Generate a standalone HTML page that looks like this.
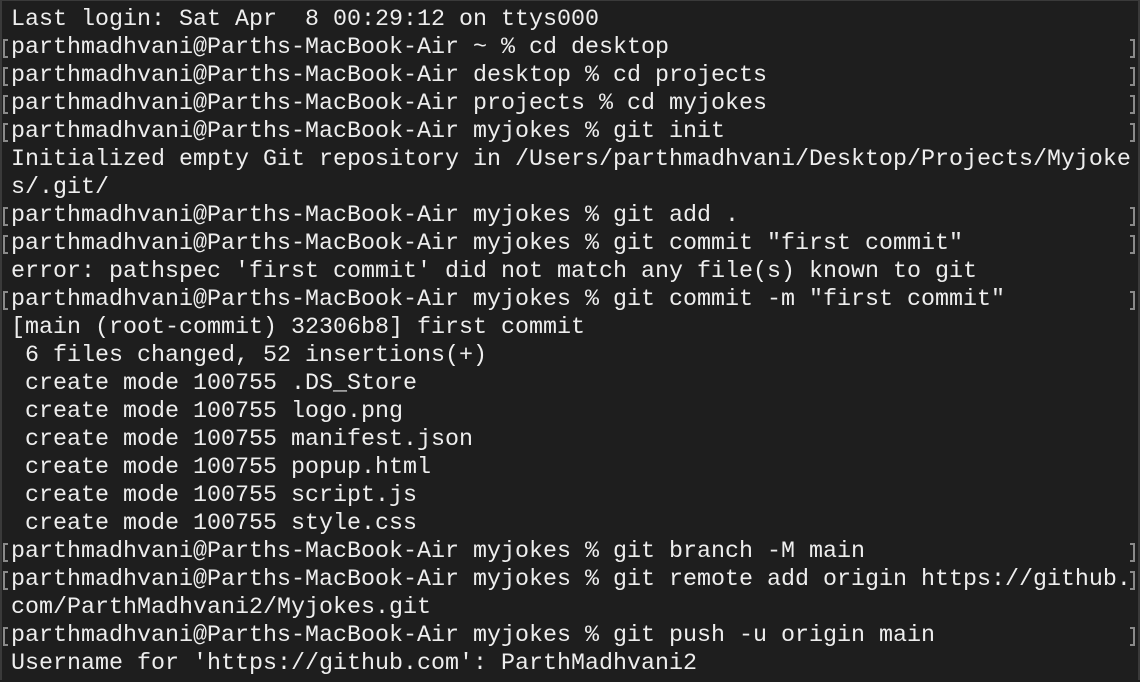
<!DOCTYPE html>
<html><head><style>
html,body{margin:0;padding:0;}
body{width:1140px;height:680px;background:#1e1e1e;overflow:hidden;position:relative;border-top:1px solid #3a3a3a;box-sizing:border-box;}
.w{position:absolute;left:0;top:1px;width:1140px;height:680px;}
.l{position:absolute;left:11px;height:28px;line-height:28px;font-family:"Liberation Mono",monospace;font-size:23.33px;color:#eeeeee;white-space:pre;}
.b{position:absolute;width:5px;height:19px;border:2px solid #8a8a8a;box-sizing:border-box;}
.bl{left:3px;border-right:none;}
.br{left:1130px;border-left:none;}
.edge{position:absolute;top:0;bottom:0;width:2px;background:#3a3a3a;}
</style></head><body>
<div class="edge" style="left:0"></div>
<div class="edge" style="right:0"></div>
<div class="w">
<div class="l" style="top:4px">Last login: Sat Apr  8 00:29:12 on ttys000</div>
<div class="l" style="top:32px">parthmadhvani@Parths-MacBook-Air ~ % cd desktop</div>
<div class="l" style="top:60px">parthmadhvani@Parths-MacBook-Air desktop % cd projects</div>
<div class="l" style="top:88px">parthmadhvani@Parths-MacBook-Air projects % cd myjokes</div>
<div class="l" style="top:116px">parthmadhvani@Parths-MacBook-Air myjokes % git init</div>
<div class="l" style="top:144px">Initialized empty Git repository in /Users/parthmadhvani/Desktop/Projects/Myjoke</div>
<div class="l" style="top:172px">s/.git/</div>
<div class="l" style="top:200px">parthmadhvani@Parths-MacBook-Air myjokes % git add .</div>
<div class="l" style="top:228px">parthmadhvani@Parths-MacBook-Air myjokes % git commit "first commit"</div>
<div class="l" style="top:256px">error: pathspec 'first commit' did not match any file(s) known to git</div>
<div class="l" style="top:284px">parthmadhvani@Parths-MacBook-Air myjokes % git commit -m "first commit"</div>
<div class="l" style="top:312px">[main (root-commit) 32306b8] first commit</div>
<div class="l" style="top:340px"> 6 files changed, 52 insertions(+)</div>
<div class="l" style="top:368px"> create mode 100755 .DS_Store</div>
<div class="l" style="top:396px"> create mode 100755 logo.png</div>
<div class="l" style="top:424px"> create mode 100755 manifest.json</div>
<div class="l" style="top:452px"> create mode 100755 popup.html</div>
<div class="l" style="top:480px"> create mode 100755 script.js</div>
<div class="l" style="top:508px"> create mode 100755 style.css</div>
<div class="l" style="top:536px">parthmadhvani@Parths-MacBook-Air myjokes % git branch -M main</div>
<div class="l" style="top:564px">parthmadhvani@Parths-MacBook-Air myjokes % git remote add origin https://github.</div>
<div class="l" style="top:592px">com/ParthMadhvani2/Myjokes.git</div>
<div class="l" style="top:620px">parthmadhvani@Parths-MacBook-Air myjokes % git push -u origin main</div>
<div class="l" style="top:648px">Username for 'https://github.com': ParthMadhvani2</div>

<div class="b bl" style="top:37px"></div><div class="b br" style="top:37px"></div>
<div class="b bl" style="top:65px"></div><div class="b br" style="top:65px"></div>
<div class="b bl" style="top:93px"></div><div class="b br" style="top:93px"></div>
<div class="b bl" style="top:121px"></div><div class="b br" style="top:121px"></div>
<div class="b bl" style="top:205px"></div><div class="b br" style="top:205px"></div>
<div class="b bl" style="top:233px"></div><div class="b br" style="top:233px"></div>
<div class="b bl" style="top:289px"></div><div class="b br" style="top:289px"></div>
<div class="b bl" style="top:541px"></div><div class="b br" style="top:541px"></div>
<div class="b bl" style="top:569px"></div><div class="b br" style="top:569px"></div>
<div class="b bl" style="top:625px"></div><div class="b br" style="top:625px"></div>
</div>
</body></html>
